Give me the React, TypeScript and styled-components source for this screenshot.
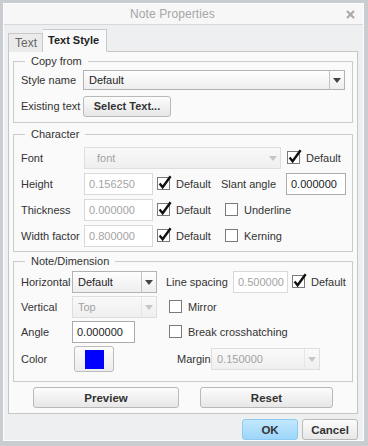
import { FC, ReactNode } from "react";
import styled, { createGlobalStyle, css } from "styled-components";

const GlobalStyle = createGlobalStyle`
  html, body {
    margin: 0;
    padding: 0;
    background: #c9ccd0;
  }
  body {
    font-family: "Liberation Sans", Arial, sans-serif;
    font-size: 11px;
    color: #333;
  }
`;

const CheckMark: FC<{ checked?: boolean }> = ({ checked }) => (
  <svg width="16" height="16" viewBox="0 0 16 16">
    <rect x="0.5" y="2.5" width="12" height="12" fill="#fff" stroke="#7a7a7a" />
    {checked && (
      <path
        d="M2.6 8.6 L5.6 12.2 L13.6 1.2"
        fill="none"
        stroke="#111"
        strokeWidth="2.4"
        strokeLinejoin="miter"
      />
    )}
  </svg>
);

const CloseIcon = () => (
  <svg width="9" height="9" viewBox="0 0 9 9">
    <path d="M1 1 L8 8 M8 1 L1 8" stroke="#a9a9a9" strokeWidth="2.2" />
  </svg>
);

const App: FC = () => {
  return (
    <>
      <GlobalStyle />
      <Window>
        <TitleBar>
          <Title>Note Properties</Title>
          <Close>
            <CloseIcon />
          </Close>
        </TitleBar>
        <Body>
          <TabList>
            <Tab>Text</Tab>
            <Tab $active>Text Style</Tab>
          </TabList>
          <Panel>
            <Group>
              <Legend>Copy from</Legend>
              <Rows $gap={4}>
                <Row>
                  <Label $w={62}>Style name</Label>
                  <Select $w={262} $h={20} value="Default" />
                </Row>
                <Row>
                  <Label $w={62}>Existing text</Label>
                  <Button $w={88}>Select Text...</Button>
                </Row>
              </Rows>
            </Group>

            <Group $mt={4} $pt={6} $pb={4}>
              <Legend>Character</Legend>
              <Rows $gap={4}>
                <Row>
                  <Label $w={63}>Font</Label>
                  <Select $w={197} disabled centered value="font" noDivider />
                  <Check $ml={6} checked>
                    Default
                  </Check>
                </Row>
                <Row>
                  <Label $w={63}>Height</Label>
                  <Input $w={69} $disabled>
                    0.156250
                  </Input>
                  <Cell $w={68}>
                    <Check $ml={4} checked>
                      Default
                    </Check>
                  </Cell>
                  <Label $w={65}>Slant angle</Label>
                  <Input $w={60}>0.000000</Input>
                </Row>
                <Row>
                  <Label $w={63}>Thickness</Label>
                  <Input $w={69} $disabled>
                    0.000000
                  </Input>
                  <Cell $w={68}>
                    <Check $ml={4} checked>
                      Default
                    </Check>
                  </Cell>
                  <Check $ml={4}>Underline</Check>
                </Row>
                <Row>
                  <Label $w={63}>Width factor</Label>
                  <Input $w={69} $disabled>
                    0.800000
                  </Input>
                  <Cell $w={68}>
                    <Check $ml={4} checked>
                      Default
                    </Check>
                  </Cell>
                  <Check $ml={4}>Kerning</Check>
                </Row>
              </Rows>
            </Group>

            <Group $mt={2} $pt={3} $pb={9}>
              <Legend>Note/Dimension</Legend>
              <Rows $gap={3}>
                <Row>
                  <Label $w={51}>Horizontal</Label>
                  <Select $w={85} value="Default" />
                  <Label $w={67} $ml={9}>
                    Line spacing
                  </Label>
                  <Input $w={55} $disabled>
                    0.500000
                  </Input>
                  <Check $ml={4} checked>
                    Default
                  </Check>
                </Row>
                <Row>
                  <Label $w={51}>Vertical</Label>
                  <Cell $w={97}>
                    <Select $w={85} disabled value="Top" />
                  </Cell>
                  <Check>Mirror</Check>
                </Row>
                <Row>
                  <Label $w={51}>Angle</Label>
                  <Cell $w={97}>
                    <Input $w={63}>0.000000</Input>
                  </Cell>
                  <Check>Break crosshatching</Check>
                </Row>
                <Row $h={26}>
                  <Label $w={51}>Color</Label>
                  <Cell $w={97}>
                    <ColorButton>
                      <Swatch $color="#0000ff" />
                    </ColorButton>
                  </Cell>
                  <Label $w={34} $ml={8}>
                    Margin
                  </Label>
                  <Select $w={109} disabled value="0.150000" />
                </Row>
              </Rows>
            </Group>

            <ActionRow>
              <Button $w={146} $big>
                Preview
              </Button>
              <Button $w={133} $big>
                Reset
              </Button>
            </ActionRow>
          </Panel>
          <Footer>
            <Button $w={56} $big $primary>
              OK
            </Button>
            <Button $w={56} $big>
              Cancel
            </Button>
          </Footer>
        </Body>
      </Window>
    </>
  );
};

type SelectProps = {
  value: string;
  disabled?: boolean;
  centered?: boolean;
  noDivider?: boolean;
  $w: number;
  $h?: number;
};

const Select: FC<SelectProps> = ({ value, disabled, centered, noDivider, $w, $h }) => (
  <SelectBox $w={$w} $h={$h} $disabled={disabled}>
    <SelectValue $disabled={disabled} $centered={centered}>
      {value}
    </SelectValue>
    <SelectArrow $disabled={disabled} $noDivider={noDivider}>
      <Triangle $disabled={disabled} />
    </SelectArrow>
  </SelectBox>
);

const Check: FC<{ checked?: boolean; children: ReactNode; $ml?: number }> = ({
  checked,
  children,
  $ml,
}) => (
  <CheckLabel $ml={$ml}>
    <CheckMark checked={checked} />
    <span>{children}</span>
  </CheckLabel>
);

const Window = styled.div`
  box-sizing: border-box;
  margin: 3px 4px 5px 3px;
  width: 361px;
  height: 438px;
  border: 1px solid #fdfdfd;
  background: #eeeff1;
  display: flex;
  flex-direction: column;
`;

const TitleBar = styled.div`
  height: 20px;
  display: flex;
  align-items: center;
  background: #f7f7f8;
  border-bottom: 1px solid #d6d8db;
`;

const Title = styled.div`
  flex: 1;
  text-align: center;
  color: #a6a6a6;
  font-size: 12px;
  letter-spacing: 0.1px;
`;

const Close = styled.div`
  width: 18px;
  padding-right: 4px;
  display: flex;
  justify-content: center;
  align-items: center;
`;

const Body = styled.div`
  padding: 4px 5px 0 4px;
  display: flex;
  flex-direction: column;
`;

const TabList = styled.div`
  display: flex;
  align-items: flex-end;
  margin-bottom: -1px;
  position: relative;
  z-index: 1;
`;

const Tab = styled.div<{ $active?: boolean }>`
  box-sizing: border-box;
  width: 35px;
  height: 19px;
  padding-left: 6px;
  display: flex;
  align-items: center;
  border: 1px solid #c8c8c8;
  border-bottom: none;
  background: #ebebec;
  color: #666;
  font-size: 12px;
  ${({ $active }) =>
    $active &&
    css`
      width: 64px;
      height: 23px;
      padding: 0 0 2px 5px;
      background: #fafafa;
      color: #222;
      font-size: 11px;
      font-weight: bold;
      border-left: none;
      border-bottom: 1px solid #fafafa;
    `}
`;

const Panel = styled.div`
  border: 1px solid #c5c6c8;
  background: #fafafa;
  padding: 2px 4px 5px 4px;
  display: flex;
  flex-direction: column;
`;

const Group = styled.fieldset<{ $mt?: number; $pt?: number; $pb?: number }>`
  margin: ${({ $mt }) => $mt ?? 0}px 0 0 0;
  padding: ${({ $pt }) => $pt ?? 1}px 7px ${({ $pb }) => $pb ?? 5}px 7px;
  border: 1px solid #cbcbcb;
  min-width: 0;
`;

const Legend = styled.legend`
  margin-left: 4px;
  padding: 0 6px;
  line-height: 14px;
  font-size: 11px;
  color: #333;
`;

const Rows = styled.div<{ $gap: number }>`
  display: flex;
  flex-direction: column;
  gap: ${({ $gap }) => $gap}px;
`;

const Row = styled.div<{ $h?: number }>`
  display: flex;
  align-items: center;
  height: ${({ $h }) => $h ?? 22}px;
`;

const Cell = styled.div<{ $w: number }>`
  width: ${({ $w }) => $w}px;
  flex: none;
  display: flex;
  align-items: center;
`;

const Label = styled.div<{ $w: number; $ml?: number }>`
  width: ${({ $w }) => $w}px;
  margin-left: ${({ $ml }) => $ml ?? 0}px;
  flex: none;
  white-space: nowrap;
  color: #333;
`;

const Input = styled.div<{ $w: number; $disabled?: boolean }>`
  box-sizing: border-box;
  width: ${({ $w }) => $w}px;
  height: 22px;
  flex: none;
  padding: 0 4px;
  display: flex;
  align-items: center;
  background: #fff;
  border: 1px solid ${({ $disabled }) => ($disabled ? "#d9d9d9" : "#ababab")};
  color: ${({ $disabled }) => ($disabled ? "#a3a3a3" : "#222")};
`;

const SelectBox = styled.div<{ $w: number; $h?: number; $disabled?: boolean }>`
  box-sizing: border-box;
  width: ${({ $w }) => $w}px;
  height: ${({ $h }) => $h ?? 22}px;
  flex: none;
  display: flex;
  border: 1px solid ${({ $disabled }) => ($disabled ? "#dedede" : "#b3b3b3")};
  background: ${({ $disabled }) =>
    $disabled ? "linear-gradient(#f9f9f9, #efefef)" : "linear-gradient(#fefefe, #eeeeee)"};
`;

const SelectValue = styled.div<{ $disabled?: boolean; $centered?: boolean }>`
  flex: 1;
  display: flex;
  align-items: center;
  padding-left: ${({ $centered }) => ($centered ? 12 : 5)}px;
  color: ${({ $disabled }) => ($disabled ? "#a3a3a3" : "#222")};
`;

const SelectArrow = styled.div<{ $disabled?: boolean; $noDivider?: boolean }>`
  width: 14px;
  display: flex;
  align-items: center;
  justify-content: center;
  border-left: 1px solid
    ${({ $disabled, $noDivider }) =>
      $noDivider ? "transparent" : $disabled ? "#e6e6e6" : "#c4c4c4"};
`;

const Triangle = styled.div<{ $disabled?: boolean }>`
  width: 0;
  height: 0;
  border-left: 4px solid transparent;
  border-right: 4px solid transparent;
  border-top: 5px solid ${({ $disabled }) => ($disabled ? "#c6c6c6" : "#444")};
`;

const CheckLabel = styled.label<{ $ml?: number }>`
  margin-left: ${({ $ml }) => $ml ?? 0}px;
  display: flex;
  align-items: center;
  gap: 3px;
  white-space: nowrap;
  color: #333;
  svg {
    margin-top: -3px;
  }
`;

const Button = styled.div<{ $w: number; $primary?: boolean; $big?: boolean }>`
  box-sizing: border-box;
  width: ${({ $w }) => $w}px;
  height: 21px;
  flex: none;
  display: flex;
  align-items: center;
  justify-content: center;
  border-radius: 3px;
  font-size: ${({ $big }) => ($big ? 11.5 : 11)}px;
  font-weight: bold;
  color: #333;
  border: 1px solid ${({ $primary }) => ($primary ? "#8ccbef" : "#b9b9b9")};
  background: ${({ $primary }) =>
    $primary ? "linear-gradient(#c2e7fd, #9dd6fa)" : "linear-gradient(#fcfcfc, #e7e7e7)"};
`;

const ColorButton = styled.div`
  box-sizing: border-box;
  margin-left: 2px;
  width: 40px;
  height: 26px;
  display: flex;
  align-items: center;
  justify-content: center;
  border: 1px solid #bcbcbc;
  border-radius: 3px;
  background: linear-gradient(#fcfcfc, #ececec);
`;

const Swatch = styled.div<{ $color: string }>`
  width: 19px;
  height: 19px;
  background: ${({ $color }) => $color};
`;

const ActionRow = styled.div`
  display: flex;
  gap: 21px;
  margin-top: 5px;
  padding-left: 20px;
`;

const Footer = styled.div`
  display: flex;
  justify-content: flex-end;
  gap: 4px;
  margin-top: 5px;
`;

export default App;
